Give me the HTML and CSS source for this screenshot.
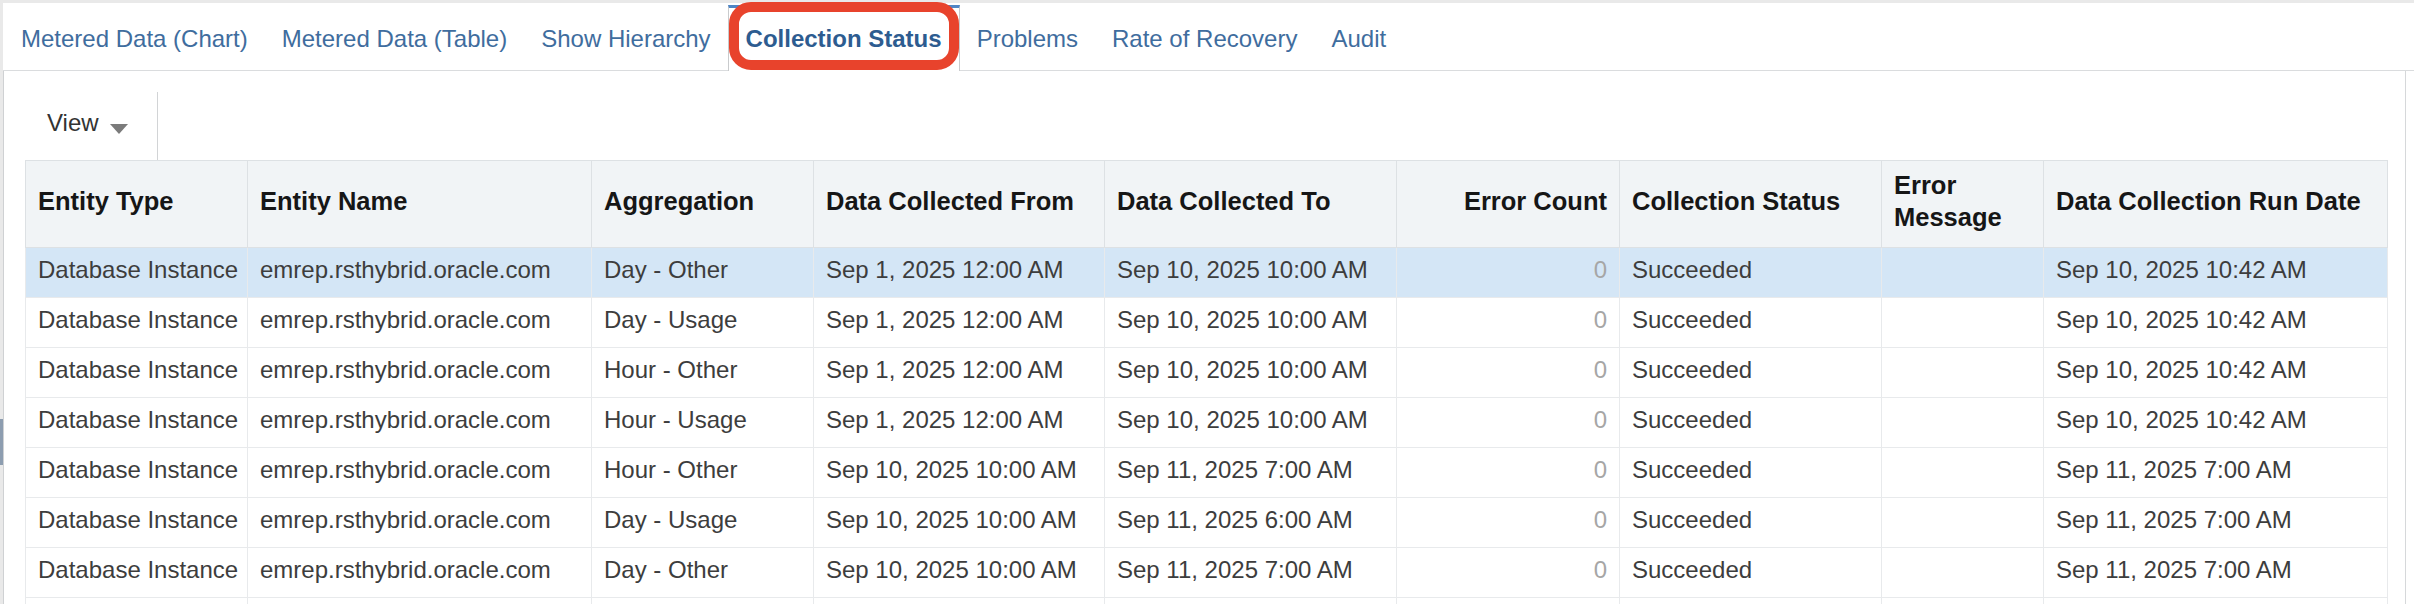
FILE: index.html
```html
<!DOCTYPE html>
<html>
<head>
<meta charset="utf-8">
<title>Collection Status</title>
<link rel="stylesheet" href="styles.css">
</head>
<body>
<div class="grip"></div>
<div class="frame">
  <div class="tabs">
    <div class="tab">Metered Data (Chart)</div>
    <div class="tab">Metered Data (Table)</div>
    <div class="tab">Show Hierarchy</div>
    <div class="tab active">Collection Status<span class="hl"></span></div>
    <div class="tab">Problems</div>
    <div class="tab">Rate of Recovery</div>
    <div class="tab">Audit</div>
  </div>
  <div class="panel">
    <div class="toolbar">
      <div class="view"><span class="view-label">View</span><span class="caret"></span></div>
    </div>
    <table class="grid">
      <colgroup>
        <col class="c1"><col class="c2"><col class="c3"><col class="c4"><col class="c5"><col class="c6"><col class="c7"><col class="c8"><col class="c9">
      </colgroup>
      <thead>
        <tr>
          <th>Entity Type</th>
          <th>Entity Name</th>
          <th>Aggregation</th>
          <th>Data Collected From</th>
          <th>Data Collected To</th>
          <th class="num">Error Count</th>
          <th>Collection Status</th>
          <th>Error Message</th>
          <th>Data Collection Run Date</th>
        </tr>
      </thead>
      <tbody>
        <tr class="sel">
          <td>Database Instance</td><td>emrep.rsthybrid.oracle.com</td><td>Day - Other</td><td>Sep 1, 2025 12:00 AM</td><td>Sep 10, 2025 10:00 AM</td><td class="num zero">0</td><td>Succeeded</td><td></td><td>Sep 10, 2025 10:42 AM</td>
        </tr>
        <tr>
          <td>Database Instance</td><td>emrep.rsthybrid.oracle.com</td><td>Day - Usage</td><td>Sep 1, 2025 12:00 AM</td><td>Sep 10, 2025 10:00 AM</td><td class="num zero">0</td><td>Succeeded</td><td></td><td>Sep 10, 2025 10:42 AM</td>
        </tr>
        <tr>
          <td>Database Instance</td><td>emrep.rsthybrid.oracle.com</td><td>Hour - Other</td><td>Sep 1, 2025 12:00 AM</td><td>Sep 10, 2025 10:00 AM</td><td class="num zero">0</td><td>Succeeded</td><td></td><td>Sep 10, 2025 10:42 AM</td>
        </tr>
        <tr>
          <td>Database Instance</td><td>emrep.rsthybrid.oracle.com</td><td>Hour - Usage</td><td>Sep 1, 2025 12:00 AM</td><td>Sep 10, 2025 10:00 AM</td><td class="num zero">0</td><td>Succeeded</td><td></td><td>Sep 10, 2025 10:42 AM</td>
        </tr>
        <tr>
          <td>Database Instance</td><td>emrep.rsthybrid.oracle.com</td><td>Hour - Other</td><td>Sep 10, 2025 10:00 AM</td><td>Sep 11, 2025 7:00 AM</td><td class="num zero">0</td><td>Succeeded</td><td></td><td>Sep 11, 2025 7:00 AM</td>
        </tr>
        <tr>
          <td>Database Instance</td><td>emrep.rsthybrid.oracle.com</td><td>Day - Usage</td><td>Sep 10, 2025 10:00 AM</td><td>Sep 11, 2025 6:00 AM</td><td class="num zero">0</td><td>Succeeded</td><td></td><td>Sep 11, 2025 7:00 AM</td>
        </tr>
        <tr>
          <td>Database Instance</td><td>emrep.rsthybrid.oracle.com</td><td>Day - Other</td><td>Sep 10, 2025 10:00 AM</td><td>Sep 11, 2025 7:00 AM</td><td class="num zero">0</td><td>Succeeded</td><td></td><td>Sep 11, 2025 7:00 AM</td>
        </tr>
        <tr>
          <td></td><td></td><td></td><td></td><td></td><td></td><td></td><td></td><td></td>
        </tr>
      </tbody>
    </table>
  </div>
</div>
</body>
</html>
```

FILE: styles.css
```css
html, body {
  margin: 0;
  padding: 0;
}

body {
  background: #e9e9e9;
  font-family: "Liberation Sans", Arial, Helvetica, sans-serif;
  height: 604px;
  overflow: hidden;
  position: relative;
}

.grip {
  position: absolute;
  left: 0;
  top: 419px;
  width: 3px;
  height: 46px;
  background: #8d9db0;
}

.frame {
  margin: 3px 0 0 3px;
  background: #ffffff;
  height: 601px;
  display: flex;
  flex-direction: column;
}

.tabs {
  display: flex;
  height: 67px;
  border-bottom: 1px solid #dadcde;
  flex: none;
}

.tab {
  padding: 22px 17px 0;
  font-size: 24px;
  line-height: 28px;
  color: #3f6d9e;
  white-space: nowrap;
}

.tab:first-child {
  padding-left: 18px;
}

.tab.active {
  position: relative;
  margin-top: 2px;
  margin-bottom: -1px;
  padding-top: 17px;
  border-top: 3px solid #4f86c6;
  border-left: 1px solid #c9cbcd;
  border-right: 1px solid #c9cbcd;
  background: #ffffff;
  font-weight: bold;
  color: #2d5c90;
}

.hl {
  position: absolute;
  left: 0;
  right: 0;
  top: -6px;
  height: 68px;
  box-sizing: border-box;
  border: 10px solid #e8432c;
  border-radius: 22px;
}

.panel {
  flex: 1;
  border-left: 1px solid #cfd1d3;
  border-right: 1px solid #d6d8da;
  margin-right: 8px;
  padding: 21px 0 0 21px;
}

.toolbar {
  display: flex;
  height: 68px;
}

.view {
  display: flex;
  align-items: center;
  gap: 11px;
  padding: 0 29px 0 22px;
  border-right: 1px solid #d2d4d6;
  font-size: 24px;
  color: #333333;
}

.view-label {
  margin-bottom: 6px;
}

.caret {
  width: 0;
  height: 0;
  margin-top: 6px;
  border-left: 9px solid transparent;
  border-right: 9px solid transparent;
  border-top: 10px solid #7b7b7b;
}

.grid {
  width: 2362px;
  table-layout: fixed;
  border-collapse: collapse;
  font-size: 24px;
}

.c1 { width: 222px; }
.c2 { width: 344px; }
.c3 { width: 222px; }
.c4 { width: 291px; }
.c5 { width: 292px; }
.c6 { width: 223px; }
.c7 { width: 262px; }
.c8 { width: 162px; }
.c9 { width: 344px; }

.grid th {
  height: 80px;
  padding: 0 12px 6px;
  background: #f1f4f6;
  border: 1px solid #dde1e4;
  font-size: 25.5px;
  line-height: 32px;
  font-weight: bold;
  color: #161616;
  text-align: left;
  vertical-align: middle;
}

.grid td {
  height: 44px;
  padding: 0 12px 5px;
  border: 1px solid #e8eaec;
  color: #3d3d3d;
  white-space: nowrap;
  overflow: hidden;
  vertical-align: middle;
}

.grid .num {
  text-align: right;
}

.grid td.zero {
  color: #a6a6a6;
}

.grid tr.sel td {
  background: #d4e6f6;
}
```
